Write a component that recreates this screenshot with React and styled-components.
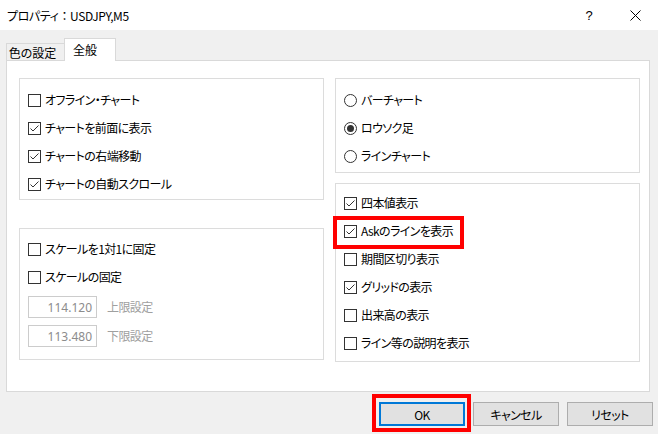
import React from 'react';
import styled, { createGlobalStyle } from 'styled-components';

const GlobalStyle = createGlobalStyle`
  html, body {
    margin: 0;
    padding: 0;
    background: #f0f0f0;
  }
  body {
    font-family: "Noto Sans CJK JP", "Noto Sans", sans-serif;
    font-size: 12px;
    color: #000;
    font-feature-settings: "palt";
  }
`;

const Window = styled.div`
  width: 658px;
  height: 434px;
  display: flex;
  flex-direction: column;
  background: #f0f0f0;
  overflow: hidden;
`;

const TitleBar = styled.div`
  height: 30px;
  display: flex;
  align-items: center;
  background: #fff;
  padding-left: 7px;
`;

const Title = styled.div`
  flex: 1;
  font-size: 12px;
  letter-spacing: -0.4px;
`;

const Colon = styled.span`
  font-feature-settings: normal;
`;

const TitleButton = styled.div`
  width: 46px;
  height: 30px;
  display: flex;
  align-items: center;
  justify-content: center;
  font-family: "Liberation Sans", sans-serif;
  font-size: 13px;
`;

const Body = styled.div`
  padding: 8px 0 0 6px;
`;

const TabStrip = styled.div`
  display: flex;
  align-items: flex-end;
  height: 22px;
`;

const Tab = styled.div`
  display: flex;
  box-sizing: border-box;
  white-space: nowrap;
  border: 1px solid #d9d9d9;
  border-bottom: none;
  padding: 0 6px;
  width: ${(p) => p.$w}px;
  height: ${(p) => (p.$active ? '23px' : '17px')};
  margin-bottom: ${(p) => (p.$active ? '-1px' : '0')};
  margin-left: ${(p) => (p.$active ? '-1px' : '0')};
  padding-top: ${(p) => (p.$active ? '2px' : '0')};
  align-items: ${(p) => (p.$active ? 'flex-start' : 'center')};
  justify-content: ${(p) => (p.$active ? 'flex-start' : 'center')};
  padding-left: ${(p) => (p.$active ? '8px' : '0')};
  background: ${(p) => (p.$active ? '#fff' : '#f0f0f0')};
  z-index: ${(p) => (p.$active ? 1 : 0)};
`;

const Panel = styled.div`
  width: 644px;
  height: 332px;
  box-sizing: border-box;
  border: 1px solid #d9d9d9;
  background: #fff;
  padding: 17px 9px 0 12px;
  display: grid;
  grid-template-columns: 305px 305px;
  column-gap: 11px;
  align-items: start;
`;

const Column = styled.div`
  display: flex;
  flex-direction: column;
  gap: ${(p) => p.$gap}px;
`;

const Group = styled.div`
  box-sizing: border-box;
  height: ${(p) => p.$h}px;
  border: 1px solid #dcdcdc;
  padding: ${(p) => p.$pt}px 0 0 8px;
  display: flex;
  flex-direction: column;
`;

const Row = styled.div`
  position: relative;
  height: 28px;
  display: flex;
  align-items: center;
  gap: 4px;
`;

const Box = styled.span`
  width: 13px;
  height: 13px;
  box-sizing: border-box;
  border: 1px solid #333;
  background: #fff;
  display: flex;
  align-items: center;
  justify-content: center;
  flex-shrink: 0;
`;

const Radio = styled.span`
  width: 13px;
  height: 13px;
  box-sizing: border-box;
  border: 1px solid #333;
  border-radius: 50%;
  display: flex;
  align-items: center;
  justify-content: center;
  flex-shrink: 0;
  &::after {
    content: '';
    width: 7px;
    height: 7px;
    border-radius: 50%;
    background: ${(p) => (p.$on ? '#333' : 'transparent')};
  }
`;

const Label = styled.span`
  white-space: nowrap;
  line-height: 1;
  letter-spacing: -0.6px;
  color: ${(p) => (p.$dim ? '#a0a0a0' : '#000')};
`;

const InputRow = styled.div`
  display: flex;
  align-items: center;
  gap: 10px;
  margin-top: ${(p) => p.$mt}px;
  height: 22px;
`;

const NumBox = styled.div`
  width: 69px;
  height: 22px;
  box-sizing: border-box;
  border: 1px solid #cccccc;
  display: flex;
  align-items: center;
  justify-content: flex-end;
  padding-right: 4px;
  color: #8c8c8c;
  font-family: "Noto Sans", sans-serif;
  font-size: 12px;
`;

const Mark = styled.span`
  position: absolute;
  left: -11px;
  top: -1px;
  width: 131px;
  height: 33px;
  box-sizing: border-box;
  border: 4px solid #ff0000;
  pointer-events: none;
`;

const Footer = styled.div`
  display: flex;
  justify-content: flex-end;
  gap: 8px;
  padding: 10px 5px 0 0;
`;

const ButtonWrap = styled.div`
  position: relative;
`;

const Button = styled.div`
  width: 86px;
  height: 24px;
  box-sizing: border-box;
  border: ${(p) => (p.$primary ? '2px solid #0078d7' : '1px solid #adadad')};
  background: #e1e1e1;
  display: flex;
  align-items: center;
  justify-content: center;
  font-size: 12px;
  letter-spacing: -0.6px;
`;

const ButtonMark = styled.span`
  position: absolute;
  left: -7px;
  top: -8px;
  right: -6px;
  bottom: -6px;
  border: 4px solid #ff0000;
  pointer-events: none;
`;

const Check = ({ on }) => (
  <Box>
    {on && (
      <svg width="11" height="11" viewBox="0 0 11 11">
        <polyline points="1.5,5.5 4,8 9.5,2.5" fill="none" stroke="#333" strokeWidth="1" />
      </svg>
    )}
  </Box>
);

const CheckRow = ({ on, children, marked }) => (
  <Row>
    <Check on={on} />
    <Label>{children}</Label>
    {marked && <Mark />}
  </Row>
);

const App = () => {
  return (
    <Window>
      <GlobalStyle />
      <TitleBar>
        <Title>
          プロパティ<Colon>：</Colon>USDJPY,M5
        </Title>
        <TitleButton>?</TitleButton>
        <TitleButton>
          <svg width="11" height="11" viewBox="0 0 11 11">
            <path d="M0.5 0.5 L10.5 10.5 M10.5 0.5 L0.5 10.5" stroke="#000" strokeWidth="1" />
          </svg>
        </TitleButton>
      </TitleBar>
      <Body>
        <TabStrip>
          <Tab $w={59}>色の設定</Tab>
          <Tab $active $w={52}>全般</Tab>
        </TabStrip>
        <Panel>
          <Column $gap={28}>
            <Group $h={122} $pt={7}>
              <CheckRow>オフライン・チャート</CheckRow>
              <CheckRow on>チャートを前面に表示</CheckRow>
              <CheckRow on>チャートの右端移動</CheckRow>
              <CheckRow on>チャートの自動スクロール</CheckRow>
            </Group>
            <Group $h={132} $pt={6}>
              <CheckRow>スケールを1対1に固定</CheckRow>
              <CheckRow>スケールの固定</CheckRow>
              <InputRow $mt={5}>
                <NumBox>114.120</NumBox>
                <Label $dim>上限設定</Label>
              </InputRow>
              <InputRow $mt={7}>
                <NumBox>113.480</NumBox>
                <Label $dim>下限設定</Label>
              </InputRow>
            </Group>
          </Column>
          <Column $gap={10}>
            <Group $h={95} $pt={7}>
              <Row>
                <Radio />
                <Label>バーチャート</Label>
              </Row>
              <Row>
                <Radio $on />
                <Label>ロウソク足</Label>
              </Row>
              <Row>
                <Radio />
                <Label>ラインチャート</Label>
              </Row>
            </Group>
            <Group $h={179} $pt={5}>
              <CheckRow on>四本値表示</CheckRow>
              <CheckRow on marked>Askのラインを表示</CheckRow>
              <CheckRow>期間区切り表示</CheckRow>
              <CheckRow on>グリッドの表示</CheckRow>
              <CheckRow>出来高の表示</CheckRow>
              <CheckRow>ライン等の説明を表示</CheckRow>
            </Group>
          </Column>
        </Panel>
      </Body>
      <Footer>
        <ButtonWrap>
          <Button $primary>OK</Button>
          <ButtonMark />
        </ButtonWrap>
        <ButtonWrap>
          <Button>キャンセル</Button>
        </ButtonWrap>
        <ButtonWrap>
          <Button>リセット</Button>
        </ButtonWrap>
      </Footer>
    </Window>
  );
};

export default App;
